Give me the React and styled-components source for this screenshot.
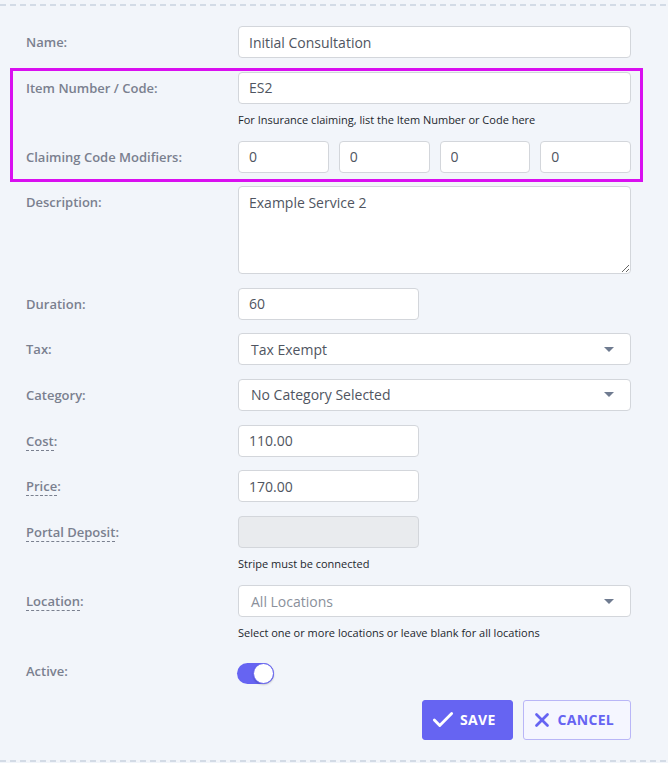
import React from 'react';
import styled, { createGlobalStyle } from 'styled-components';
import { Check, X } from 'lucide-react';

const GlobalStyle = createGlobalStyle`
	body {
		margin: 0;
		background: #f2f5fa;
		font-family: 'Open Sans', 'Liberation Sans', sans-serif;
	}
`;

const Dashes = styled.div`
	height: 2px;
	background: repeating-linear-gradient(to right, #d3dbe6 0 6px, transparent 6px 10px);
`;

const Wrapper = styled.div`
	padding-top: 4px;
`;

const Form = styled.div`
	display: flex;
	flex-direction: column;
	gap: 13.6px;
	padding: 20px 37px 20px 26px;
`;

const Group = styled.div`
	position: relative;
	display: flex;
	flex-direction: column;
	gap: 13px;

	&::before {
		content: '';
		position: absolute;
		top: -4px;
		bottom: -9px;
		left: -16px;
		right: -12px;
		border: 3px solid #d90ff0;
		pointer-events: none;
	}
`;

const Row = styled.div`
	display: grid;
	grid-template-columns: 212px 1fr;
	align-items: start;
`;

const Label = styled.div`
	padding-top: 6px;
	font-size: 13px;
	line-height: 20px;
	font-weight: 600;
	color: #7a808f;
`;

const Tip = styled.span`
	border-bottom: 1px dashed #7a808f;
`;

const Field = styled.div`
	display: flex;
	flex-direction: column;
	align-items: flex-start;
`;

const Input = styled.input`
	box-sizing: border-box;
	width: ${p => (p.$short ? '181px' : '100%')};
	height: 32px;
	padding: 0 10px;
	font-family: inherit;
	font-size: 14px;
	color: #4f5561;
	background: ${p => (p.disabled ? '#e9ebee' : '#fff')};
	border: 1px solid #d3d6db;
	border-radius: 4px;
	outline: none;
`;

const TextArea = styled.textarea`
	box-sizing: border-box;
	width: 100%;
	height: 88px;
	padding: 6px 10px;
	font-family: inherit;
	font-size: 14px;
	line-height: 20px;
	color: #4f5561;
	background: #fff;
	border: 1px solid #d3d6db;
	border-radius: 4px;
	outline: none;
	display: block;
`;

const Select = styled.div`
	box-sizing: border-box;
	width: 100%;
	height: 32px;
	padding: 0 12px;
	display: flex;
	align-items: center;
	justify-content: space-between;
	font-size: 14px;
	color: ${p => (p.$placeholder ? '#8a909b' : '#4f5561')};
	background: #fff;
	border: 1px solid #d3d6db;
	border-radius: 4px;

	&::after {
		content: '';
		border-left: 5px solid transparent;
		border-right: 5px solid transparent;
		border-top: 5px solid #6f7b90;
		margin-right: 4px;
	}
`;

const Help = styled.div`
	margin-top: 7px;
	font-size: 11px;
	line-height: 17px;
	color: #23272d;
`;

const Modifiers = styled.div`
	width: 100%;
	display: grid;
	grid-template-columns: repeat(4, 1fr);
	gap: 10px;
`;

const Toggle = styled.div`
	margin-top: 8px;
	margin-left: -1px;
	width: 37px;
	height: 21px;
	border-radius: 11px;
	background: #6664f2;
	display: flex;
	align-items: center;
	justify-content: flex-end;
`;

const Knob = styled.div`
	box-sizing: border-box;
	width: 21px;
	height: 21px;
	border-radius: 50%;
	background: #fff;
	border: 1px solid #6664f2;
	box-shadow: 0 1px 2px rgba(0, 0, 0, 0.2);
`;

const Actions = styled.div`
	display: flex;
	justify-content: flex-end;
	gap: 10px;
	padding-top: 2px;
`;

const Button = styled.button`
	height: 40px;
	padding: ${p => (p.$primary ? '0 16px 0 7px' : '0 16px 0 7px')};
	display: flex;
	align-items: center;
	gap: ${p => (p.$primary ? '4px' : '5px')};
	font-family: inherit;
	font-size: 14px;
	font-weight: 700;
	letter-spacing: 0.3px;
	border-radius: 3px;
	color: ${p => (p.$primary ? '#fff' : '#6664f2')};
	background: ${p => (p.$primary ? '#6664f2' : '#f5f6ff')};
	border: 1px solid ${p => (p.$primary ? '#6664f2' : '#b9b6f7')};
	cursor: pointer;
`;

export default () => (
	<Wrapper>
		<GlobalStyle />
		<Dashes />
		<Form>
			<Row>
				<Label>Name:</Label>
				<Input readOnly defaultValue="Initial Consultation" />
			</Row>
			<Group>
				<Row>
					<Label>Item Number / Code:</Label>
					<Field>
						<Input readOnly defaultValue="ES2" />
						<Help>For Insurance claiming, list the Item Number or Code here</Help>
					</Field>
				</Row>
				<Row>
					<Label>Claiming Code Modifiers:</Label>
					<Modifiers>
						<Input readOnly defaultValue="0" />
						<Input readOnly defaultValue="0" />
						<Input readOnly defaultValue="0" />
						<Input readOnly defaultValue="0" />
					</Modifiers>
				</Row>
			</Group>
			<Row>
				<Label>Description:</Label>
				<TextArea readOnly defaultValue="Example Service 2" />
			</Row>
			<Row>
				<Label>Duration:</Label>
				<Input $short readOnly defaultValue="60" />
			</Row>
			<Row>
				<Label>Tax:</Label>
				<Select>Tax Exempt</Select>
			</Row>
			<Row>
				<Label>Category:</Label>
				<Select>No Category Selected</Select>
			</Row>
			<Row>
				<Label><Tip>Cost</Tip>:</Label>
				<Input $short readOnly defaultValue="110.00" />
			</Row>
			<Row>
				<Label><Tip>Price</Tip>:</Label>
				<Input $short readOnly defaultValue="170.00" />
			</Row>
			<Row>
				<Label><Tip>Portal Deposit</Tip>:</Label>
				<Field>
					<Input $short disabled />
					<Help>Stripe must be connected</Help>
				</Field>
			</Row>
			<Row>
				<Label><Tip>Location</Tip>:</Label>
				<Field>
					<Select $placeholder>All Locations</Select>
					<Help>Select one or more locations or leave blank for all locations</Help>
				</Field>
			</Row>
			<Row>
				<Label>Active:</Label>
				<Toggle>
					<Knob />
				</Toggle>
			</Row>
			<Actions>
				<Button $primary>
					<Check size={26} strokeWidth={2.6} />
					SAVE
				</Button>
				<Button>
					<X size={22} strokeWidth={3} />
					CANCEL
				</Button>
			</Actions>
		</Form>
		<Dashes />
	</Wrapper>
);
